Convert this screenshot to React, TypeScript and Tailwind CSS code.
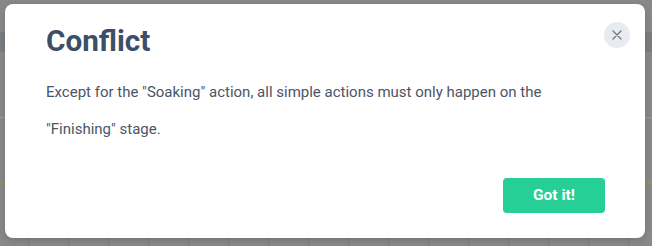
import React from "react";

export default function App() {
  const cols = Array.from({ length: 17 });
  return (
    <div
      className="relative w-[652px] h-[246px] overflow-hidden bg-[#888888]"
      style={{ fontFamily: "Roboto, 'Liberation Sans', sans-serif" }}
    >
      {/* dimmed background page */}
      <div className="flex flex-col h-full">
        <div className="h-[32px]" />
        <div className="h-[20px] bg-[#7a7d80]" />
        <div className="h-[66px] border-b border-[#9a9a9a] pl-[6px] pt-[20px] text-[13px] text-[#3c4652] leading-[20px]">
          <div>S</div>
          <div>4</div>
        </div>
        <div className="h-[64px]" />
        <div className="h-[2px] bg-[#8f9650]" />
        <div className="flex-1" />
        <div className="h-[8px] flex">
          {cols.map((_, i) => (
            <div key={i} className="w-[40px] shrink-0 border-l border-[#7c7c7c] first:w-[28px] first:border-l-0" />
          ))}
        </div>
      </div>

      {/* modal */}
      <div className="absolute left-[5px] top-[4px] w-[640px] h-[234px] bg-white rounded-[8px] shadow-[0_2px_6px_rgba(0,0,0,0.15)] pl-[41px] pr-[40px] pt-[19px] flex flex-col">
        <button className="absolute right-[15px] top-[18px] w-[26px] h-[26px] rounded-full bg-[#e8ebef] flex items-center justify-center">
          <svg width="10" height="10" viewBox="0 0 10 10" fill="none" stroke="#6b7480" strokeWidth="1.2" strokeLinecap="round">
            <path d="M1 1L9 9M9 1L1 9" />
          </svg>
        </button>
        <h1 className="text-[29.7px] font-bold leading-[36px] text-[#3d4f68]">Conflict</h1>
        <p className="mt-[15px] text-[15px] leading-[37px] text-[#4b5568]">
          Except for the "Soaking" action, all simple actions must only happen on the "Finishing" stage.
        </p>
        <div className="flex justify-end mt-[30px]">
          <button className="w-[102px] h-[35px] rounded-[4px] bg-[#25cf95] text-white font-bold text-[15.5px]">
            Got it!
          </button>
        </div>
      </div>
    </div>
  );
}
